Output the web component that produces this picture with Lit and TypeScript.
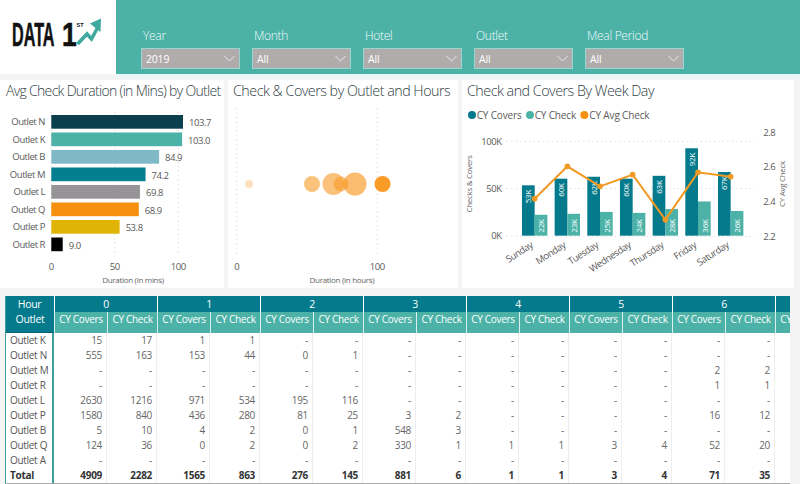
import { LitElement, html, css, svg } from "lit";
import { customElement } from "lit/decorators.js";

const slicers = [
  ["Year", "2019"],
  ["Month", "All"],
  ["Hotel", "All"],
  ["Outlet", "All"],
  ["Meal Period", "All"],
];

const bars = [
  ["Outlet N", 103.7, "#0b3f4d", "103.7"],
  ["Outlet K", 103.0, "#4cb2a8", "103.0"],
  ["Outlet B", 84.9, "#7fb9c8", "84.9"],
  ["Outlet M", 74.2, "#017f91", "74.2"],
  ["Outlet L", 69.8, "#979497", "69.8"],
  ["Outlet Q", 68.9, "#f7900f", "68.9"],
  ["Outlet P", 53.8, "#dfb406", "53.8"],
  ["Outlet R", 9.0, "#000000", "9.0"],
] as const;

const bubbles = [
  [21, 106, 4, 0.28],
  [84, 106, 8, 0.55],
  [105.5, 106, 11, 0.55],
  [113, 106, 7.5, 0.45],
  [127, 106, 11.5, 0.6],
  [154.5, 106, 8, 0.9],
];

const week = [
  ["Sunday", 53, 22, 362],
  ["Monday", 60, 23, 265],
  ["Tuesday", 62, 25, 325],
  ["Wednesday", 60, 24, 290],
  ["Thursday", 63, 28, 425],
  ["Friday", 92, 36, 283],
  ["Saturday", 67, 26, 296],
] as const;

const d = "-";
const rows: [string, string[]][] = [
  ["Outlet K", ["15", "17", "1", "1", d, d, d, d, d, d, d, d, d, d]],
  ["Outlet N", ["555", "163", "153", "44", "0", "1", d, d, d, d, d, d, d, d]],
  ["Outlet M", [d, d, d, d, d, d, d, d, d, d, d, d, "2", "2"]],
  ["Outlet R", [d, d, d, d, d, d, d, d, d, d, d, d, "1", "1"]],
  ["Outlet L", ["2630", "1216", "971", "534", "195", "116", d, d, d, d, d, d, d, d]],
  ["Outlet P", ["1580", "840", "436", "280", "81", "25", "3", "2", d, d, d, d, "16", "12"]],
  ["Outlet B", ["5", "10", "4", "2", "0", "1", "548", "3", d, d, d, d, d, d]],
  ["Outlet Q", ["124", "36", "0", "2", "0", "2", "330", "1", "1", "1", "3", "4", "52", "20"]],
  ["Outlet A", [d, d, d, d, d, d, d, d, d, d, d, d, d, d]],
];
const totals = ["4909", "2282", "1565", "863", "276", "145", "881", "6", "1", "1", "3", "4", "71", "35"];
const hours = ["0", "1", "2", "3", "4", "5", "6"];

@customElement("app-root")
export class AppRoot extends LitElement {
  static styles = css`
    :host {
      display: block;
      width: 800px;
      height: 484px;
      overflow: hidden;
      background: #f4f4f4;
      font-family: "Open Sans", "Noto Sans", sans-serif;
      color: #555;
    }
    .top { display: flex; height: 74px; }
    .logo { width: 116px; background: #fff; }
    .logo svg { display: block; }
    .logo text { font-family: "Liberation Sans", sans-serif; font-weight: 700; fill: #111; letter-spacing: 0; }
    .logo .big { font-size: 33px; stroke: #111; stroke-width: 0.6px; }
    .logo .st { font-size: 5.5px; }
    .filters {
      flex: 1;
      background: #4cb2a8;
      display: flex;
      gap: 12px;
      align-items: flex-end;
      padding: 0 0 5px 25px;
    }
    .slicer { width: 99px; }
    .slabel { font-size: 12px; font-weight: 300; color: #f2fbfa; line-height: 16px; padding: 0 0 4px 2px; letter-spacing: -0.3px; }
    .select {
      box-sizing: border-box;
      height: 21px;
      background: #b0acac;
      border: 1px solid #9bd5d0;
      color: #fff;
      font-size: 10.5px;
      letter-spacing: -0.2px;
      display: flex;
      align-items: center;
      justify-content: space-between;
      padding: 0 4px;
    }
    .strip { height: 4px; background: linear-gradient(90deg, #f4f4f4 0 116px, #e9f6f8 116px); }
    .charts { display: flex; gap: 4px; margin-top: 2px; height: 208px; }
    .card { background: #fff; display: flex; flex-direction: column; }
    .c1 { width: 224px; }
    .c2 { width: 230px; }
    .c3 { width: 332px; }
    .title {
      font-size: 14.3px;
      font-weight: 300;
      line-height: 20px;
      color: #2f4045;
      padding: 1px 0 0 5px;
      white-space: nowrap;
      letter-spacing: -0.5px;
    }
    .c1 .title { padding-left: 6px; font-size: 14px; letter-spacing: -0.68px; }
    .card svg { display: block; margin-top: -1px; }
    text { font-family: "Open Sans", "Noto Sans", sans-serif; fill: #5a5a5a; font-size: 9.5px; letter-spacing: -0.45px; }
    .axis { font-size: 8px; fill: #666; letter-spacing: -0.3px; }
    .lbl { fill: #fff; font-size: 8px; letter-spacing: -0.2px; }
    .leg { font-size: 10px; fill: #5a5a5a; letter-spacing: -0.15px; }
    .grid { stroke: #ddd; stroke-width: 1; stroke-dasharray: 1.5 3; }
    .tablewrap {
      margin: 8px 0 0 5px;
      width: 785px;
      height: 188px;
      background: #fff;
      overflow: hidden;
      border-left: 1px solid #3f9f9a;
      box-sizing: border-box;
      border-bottom: 1px solid #aaa;
    }
    .tbl {
      display: grid;
      grid-template-columns: 48px repeat(7, 53px 50px) 53px;
      grid-template-rows: 16px 21px repeat(9, 15px) 15px;
      width: 830px;
      font-size: 10px;
      letter-spacing: -0.3px;
    }
    .hh, .hour { background: #047a8c; color: #fff; text-align: center; line-height: 16px; font-size: 10.5px; }
    .hour { grid-column: span 2; border-left: 1px solid #fff; box-sizing: border-box; }
    .hour.last { grid-column: span 1; }
    .hh { border-right: 1px solid #047a8c; }
    .outlet { background: #047a8c; color: #fff; text-align: center; line-height: 15px; font-size: 10.5px; box-shadow: inset 0 -1px #0b6472; }
    .m {
      background: #4cb2a8;
      color: #fff;
      text-align: center;
      line-height: 15px;
      font-size: 10px;
      white-space: nowrap;
      overflow: hidden;
      box-sizing: border-box;
      border-left: 1px solid #d8f0ee;
    }
    .name, .v { line-height: 15px; height: 15px; white-space: nowrap; box-sizing: border-box; }
    .name { padding-left: 4px; border-right: 2px solid #3f9f9a; color: #555; }
    .v { text-align: right; padding-right: 4px; border-right: 1px solid #eee; color: #666; }
    .t { font-weight: 700; color: #333; }
  `;

  logo() {
    return html`<svg width="116" height="74" viewBox="0 0 116 74">
      <text class="big" transform="translate(12 46) scale(0.49 1)">DATA</text>
      <text class="big" transform="translate(62 46) scale(0.8 1)">1</text>
      <text class="st" x="76.5" y="26.5">ST</text>
      <path d="M77.5 44 L87 34 L91.5 39 L98.5 26" fill="none" stroke="#3fa89f" stroke-width="3.6"/>
      <path d="M90 23.5 L101 18.5 L100.5 32 Z" fill="#3fa89f"/>
    </svg>`;
  }

  chart1() {
    const x0 = 51.3;
    const k = 1.27;
    return html`<svg width="224" height="188" viewBox="0 100 224 188">
      ${[0, 50, 100].map(
        (v) => svg`<line class="grid" x1=${x0 + v * k} x2=${x0 + v * k} y1="112" y2="256"></line>`
      )}
      ${bars.map((b, i) => {
        const y = 115 + i * 17.5;
        const w = b[1] * k;
        return svg`
          <rect x=${x0} y=${y} width=${w} height="13.7" fill=${b[2]}></rect>
          <text x="45" y=${y + 10} text-anchor="end">${b[0]}</text>
          <text x=${x0 + w + 6} y=${y + 11}>${b[3]}</text>`;
      })}
      ${[0, 50, 100].map(
        (v) => svg`<text x=${x0 + v * k} y="270" text-anchor="middle">${v}</text>`
      )}
      <text class="axis" x="133" y="283" text-anchor="middle">Duration (in mins)</text>
    </svg>`;
  }

  chart2() {
    return html`<svg width="230" height="188" viewBox="0 22 230 188">
      <line class="grid" x1="8.7" x2="8.7" y1="30" y2="178"></line>
      <line class="grid" x1="149.3" x2="149.3" y1="30" y2="178"></line>
      ${bubbles.map(
        (b) => svg`<circle cx=${b[0]} cy=${b[1]} r=${b[2]} fill="#f7900f" fill-opacity=${b[3]}></circle>`
      )}
      <text x="8.7" y="192" text-anchor="middle">0</text>
      <text x="149.3" y="192" text-anchor="middle">100</text>
      <text class="axis" x="114" y="205" text-anchor="middle">Duration (in hours)</text>
    </svg>`;
  }

  chart3() {
    const X = (p: number) => p / 3 - 2;
    const Y = (p: number) => p / 3 - 22;
    const base = Y(473);
    const scale = 0.95;
    const pts = week.map((w, i) => `${X(224 + i * 98)},${Y(w[3])}`).join(" ");
    return html`<svg width="332" height="188" viewBox="0 0 332 188">
      <circle cx=${X(36)} cy=${Y(111)} r="4" fill="#047a8c"></circle>
      <text class="leg" x=${X(50)} y=${Y(111) + 3.5}>CY Covers</text>
      <circle cx=${X(210)} cy=${Y(111)} r="4" fill="#4cb2a8"></circle>
      <text class="leg" x=${X(224)} y=${Y(111) + 3.5}>CY Check</text>
      <circle cx=${X(373)} cy=${Y(111)} r="4" fill="#f7900f"></circle>
      <text class="leg" x=${X(388)} y=${Y(111) + 3.5}>CY Avg Check</text>

      ${[190, 332, 475].map(
        (p) => svg`<line class="grid" x1=${X(140)} x2=${X(885)} y1=${Y(p)} y2=${Y(p)}></line>`
      )}
      ${[["100K", 190], ["50K", 332], ["0K", 473]].map(
        (t) => svg`<text x=${X(125)} y=${Y(t[1] as number) + 3.5} text-anchor="end">${t[0]}</text>`
      )}
      ${[["2.8", 163], ["2.6", 266], ["2.4", 371], ["2.2", 475]].map(
        (t) => svg`<text x=${X(910)} y=${Y(t[1] as number) + 3.5}>${t[0]}</text>`
      )}
      <text class="axis" transform="translate(${X(36)} ${Y(318)}) rotate(-90)" text-anchor="middle">Checks &amp; Covers</text>
      <text class="axis" transform="translate(${X(974)} ${Y(318)}) rotate(-90)" text-anchor="middle">CY Avg Check</text>

      ${week.map((w, i) => {
        const c = X(224 + i * 98);
        const h1 = w[1] * scale;
        const h2 = w[2] * scale;
        return svg`
          <rect x=${c - 12.7} y=${base - h1} width="12.7" height=${h1} fill="#047a8c"></rect>
          <rect x=${c} y=${base - h2} width="12.7" height=${h2} fill="#4cb2a8"></rect>
          <text class="lbl" transform="translate(${c - 3.5} ${base - h1 + 18}) rotate(-90)">${w[1]}K</text>
          <text class="lbl" transform="translate(${c + 9.5} ${base - 3}) rotate(-90)">${w[2]}K</text>
          <text transform="translate(${c - 1} ${base + 11}) rotate(-33)" text-anchor="end">${w[0]}</text>`;
      })}
      <polyline points=${pts} fill="none" stroke="#f09a24" stroke-width="2"></polyline>
      ${week.map(
        (w, i) => svg`<circle cx=${X(224 + i * 98)} cy=${Y(w[3])} r="2.8" fill="#f09a24"></circle>`
      )}
    </svg>`;
  }

  table() {
    return html`<div class="tablewrap"><div class="tbl">
      <div class="hh">Hour</div>
      ${hours.map((h) => html`<div class="hour">${h}</div>`)}
      <div class="hour last"></div>
      <div class="outlet">Outlet</div>
      ${hours.map(() => html`<div class="m">CY Covers</div><div class="m">CY Check</div>`)}
      <div class="m">CY Covers</div>
      ${rows.map(
        (r) => html`<div class="name">${r[0]}</div>${r[1].map((v) => html`<div class="v">${v}</div>`)}<div></div>`
      )}
      <div class="name t">Total</div>
      ${totals.map((v) => html`<div class="v t">${v}</div>`)}<div></div>
    </div></div>`;
  }

  render() {
    return html`
      <div class="top">
        <div class="logo">${this.logo()}</div>
        <div class="filters">
          ${slicers.map(
            (s) => html`<div class="slicer">
              <div class="slabel">${s[0]}</div>
              <div class="select"><span>${s[1]}</span>
                <svg width="11" height="7" viewBox="0 0 11 7"><path d="M0.5 1 L5.5 6 L10.5 1" fill="none" stroke="#e8e8e8" stroke-width="1"/></svg>
              </div>
            </div>`
          )}
        </div>
      </div>
      <div class="strip"></div>
      <div class="charts">
        <div class="card c1"><div class="title">Avg Check Duration (in Mins) by Outlet</div>${this.chart1()}</div>
        <div class="card c2"><div class="title">Check &amp; Covers by Outlet and Hours</div>${this.chart2()}</div>
        <div class="card c3"><div class="title">Check and Covers By Week Day</div>${this.chart3()}</div>
      </div>
      ${this.table()}
    `;
  }
}
